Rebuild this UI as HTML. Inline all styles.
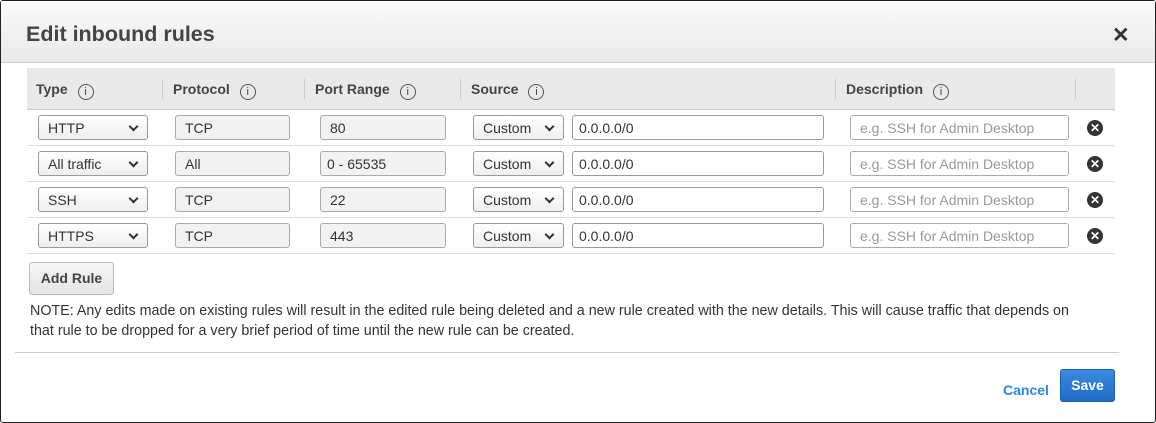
<!DOCTYPE html>
<html><head><style>
body{margin:0;width:1156px;height:423px;position:relative;font-family:"Liberation Sans",sans-serif;background:#fff;overflow:hidden}
.frame{position:absolute;left:0;top:0;width:1154px;height:421px;border:1px solid #222;border-radius:3px}
.hdr{position:absolute;left:1px;top:1px;width:1154px;height:61px;background:linear-gradient(#fafafa,#e9e9e9);border-bottom:1px solid #ccc}
.hdr h1{position:absolute;left:25px;top:21px;margin:0;font-size:21.5px;font-weight:bold;color:#444}
.close{position:absolute;left:1111px;top:22px;font-size:21px;color:#333;font-weight:bold}
.th{position:absolute;top:68px;left:27px;width:1088px;height:41px;background:#e9e9e9;border-bottom:1px solid #ccc}
.th span{position:absolute;top:13px;font-size:14px;font-weight:bold;color:#444}
.info{display:inline-block;width:14px;height:14px;border:1px solid #555;border-radius:50%;font-size:11px;text-align:center;line-height:14px;font-weight:normal;font-style:normal;margin-left:10px;vertical-align:-1px;color:#444}
.sep{position:absolute;top:11px;width:1px;height:20px;background:#ccc}
.row{position:absolute;left:27px;width:1088px;height:35px;border-bottom:1px solid #ddd}
.f{position:absolute;top:5px;height:25px;border:1px solid #aaa;border-radius:3px;box-sizing:border-box;font-size:14px;line-height:25px;padding-left:9px;color:#333;background:#f2f2f2}
.sel{background:linear-gradient(#fff,#eee);border-color:#999}
.sel:after{content:"";position:absolute;right:10px;top:7px;width:5px;height:5px;border-right:2px solid #333;border-bottom:2px solid #333;transform:rotate(45deg)}
.w{background:#fff;border-color:#999;padding-left:6px}
.ph{color:#999;background:#fff}
.x{position:absolute;left:1060px;top:10px;width:16px;height:16px;border-radius:50%;background:#333;color:#fff;font-size:12px;line-height:16px;text-align:center;font-weight:bold}
.btn{position:absolute;left:29px;top:262px;width:85px;height:33px;box-sizing:border-box;border:1px solid #bbb;border-radius:3px;background:linear-gradient(#f6f6f6,#e4e4e4);font-size:14px;font-weight:bold;color:#444;text-align:center;line-height:31px}
.note{position:absolute;left:30px;top:301px;width:1045px;font-size:14.3px;line-height:20px;color:#333}
.hr{position:absolute;left:15px;top:352px;width:1104px;height:1px;background:#ccc}
.cancel{position:absolute;left:1003px;top:382px;font-size:14px;font-weight:bold;color:#2a8ae0}
.save{position:absolute;left:1060px;top:369px;width:55px;height:33px;box-sizing:border-box;border:1px solid #1a5fa8;border-radius:3px;background:linear-gradient(#3b8be0,#1e6bc4);color:#fff;font-weight:bold;font-size:14px;text-align:center;line-height:31px}
</style></head><body>
<div class="frame"></div>
<div class="hdr"><h1>Edit inbound rules</h1><div class="close">✕</div></div>
<div class="th">
<span style="left:9px">Type<i class="info">i</i></span>
<div class="sep" style="left:135px"></div>
<span style="left:146px">Protocol<i class="info">i</i></span>
<div class="sep" style="left:277px"></div>
<span style="left:288px">Port Range<i class="info">i</i></span>
<div class="sep" style="left:433px"></div>
<span style="left:444px">Source<i class="info">i</i></span>
<div class="sep" style="left:808px"></div>
<span style="left:819px">Description<i class="info">i</i></span>
<div class="sep" style="left:1048px"></div>
</div>
<div class="row" style="top:110px"><div class="f sel" style="left:11px;width:110px">HTTP</div><div class="f" style="left:148px;width:115px">TCP</div><div class="f" style="left:293px;width:126px">80</div><div class="f sel" style="left:446px;width:91px">Custom</div><div class="f w" style="left:545px;width:252px">0.0.0.0/0</div><div class="f ph" style="left:823px;width:219px">e.g. SSH for Admin Desktop</div><div class="x">✕</div></div>
<div class="row" style="top:146px"><div class="f sel" style="left:11px;width:110px">All traffic</div><div class="f" style="left:148px;width:115px">All</div><div class="f" style="left:293px;width:126px;padding-left:6px">0 - 65535</div><div class="f sel" style="left:446px;width:91px">Custom</div><div class="f w" style="left:545px;width:252px">0.0.0.0/0</div><div class="f ph" style="left:823px;width:219px">e.g. SSH for Admin Desktop</div><div class="x">✕</div></div>
<div class="row" style="top:182px"><div class="f sel" style="left:11px;width:110px">SSH</div><div class="f" style="left:148px;width:115px">TCP</div><div class="f" style="left:293px;width:126px">22</div><div class="f sel" style="left:446px;width:91px">Custom</div><div class="f w" style="left:545px;width:252px">0.0.0.0/0</div><div class="f ph" style="left:823px;width:219px">e.g. SSH for Admin Desktop</div><div class="x">✕</div></div>
<div class="row" style="top:218px"><div class="f sel" style="left:11px;width:110px">HTTPS</div><div class="f" style="left:148px;width:115px">TCP</div><div class="f" style="left:293px;width:126px">443</div><div class="f sel" style="left:446px;width:91px">Custom</div><div class="f w" style="left:545px;width:252px">0.0.0.0/0</div><div class="f ph" style="left:823px;width:219px">e.g. SSH for Admin Desktop</div><div class="x">✕</div></div>
<div class="btn">Add Rule</div>
<div class="note">NOTE: Any edits made on existing rules will result in the edited rule being deleted and a new rule created with the new details. This will cause traffic that depends on that rule to be dropped for a very brief period of time until the new rule can be created.</div>
<div class="hr"></div>
<div class="cancel">Cancel</div>
<div class="save">Save</div>
</body></html>
